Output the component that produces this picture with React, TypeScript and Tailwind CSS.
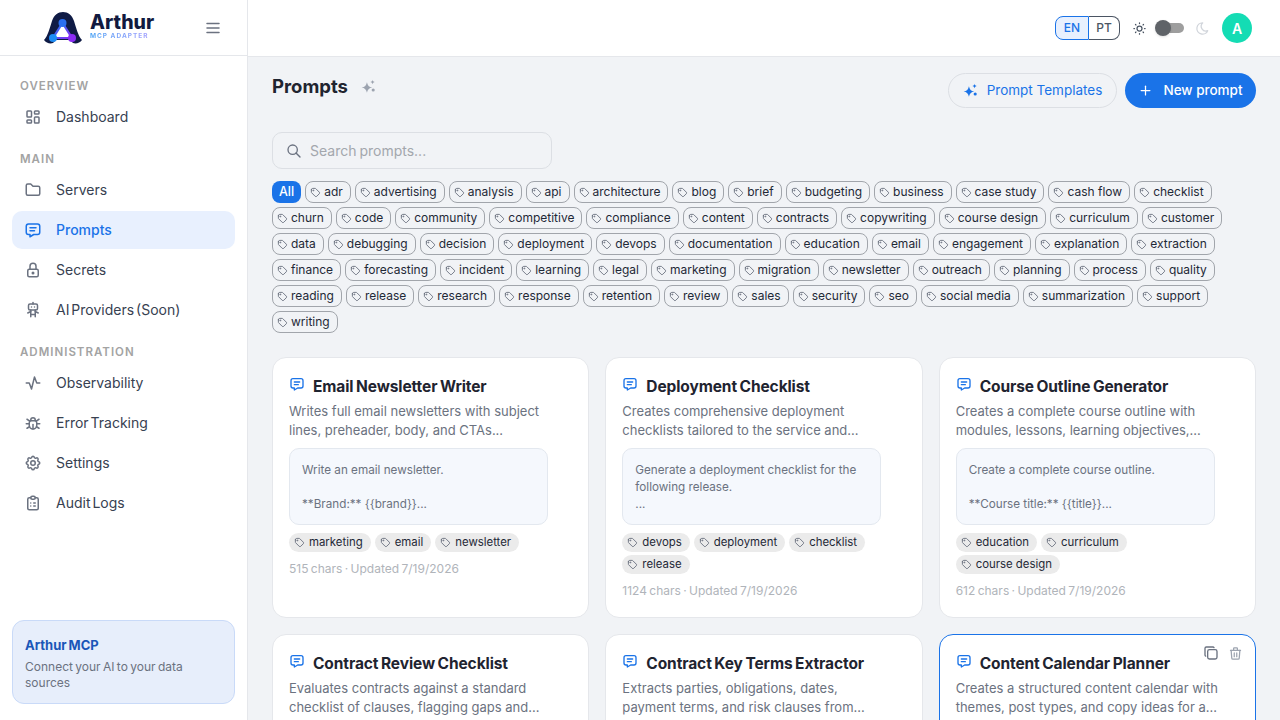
import { ReactNode } from 'react';
import {
  TbActivity,
  TbBug,
  TbClipboardList,
  TbCopy,
  TbFolder,
  TbLayoutDashboard,
  TbLock,
  TbMenu2,
  TbMessage,
  TbMoon,
  TbPlus,
  TbRobot,
  TbSearch,
  TbSettings,
  TbSun,
  TbTag,
  TbTrash,
} from 'react-icons/tb';

const FILTERS = [
  'adr', 'advertising', 'analysis', 'api', 'architecture', 'blog', 'brief', 'budgeting', 'business', 'case study', 'cash flow', 'checklist',
  'churn', 'code', 'community', 'competitive', 'compliance', 'content', 'contracts', 'copywriting', 'course design', 'curriculum', 'customer',
  'data', 'debugging', 'decision', 'deployment', 'devops', 'documentation', 'education', 'email', 'engagement', 'explanation', 'extraction',
  'finance', 'forecasting', 'incident', 'learning', 'legal', 'marketing', 'migration', 'newsletter', 'outreach', 'planning', 'process', 'quality',
  'reading', 'release', 'research', 'response', 'retention', 'review', 'sales', 'security', 'seo', 'social media', 'summarization', 'support',
  'writing',
];

type Prompt = {
  title: string;
  description: string;
  preview?: string;
  tags?: string[];
  meta?: string;
  selected?: boolean;
};

const PROMPTS: Prompt[] = [
  {
    title: 'Email Newsletter Writer',
    description: 'Writes full email newsletters with subject lines, preheader, body, and CTAs...',
    preview: 'Write an email newsletter.\n\n**Brand:** {{brand}}...',
    tags: ['marketing', 'email', 'newsletter'],
    meta: '515 chars · Updated 7/19/2026',
  },
  {
    title: 'Deployment Checklist',
    description: 'Creates comprehensive deployment checklists tailored to the service and...',
    preview: 'Generate a deployment checklist for the following release.\n...',
    tags: ['devops', 'deployment', 'checklist', 'release'],
    meta: '1124 chars · Updated 7/19/2026',
  },
  {
    title: 'Course Outline Generator',
    description: 'Creates a complete course outline with modules, lessons, learning objectives,...',
    preview: 'Create a complete course outline.\n\n**Course title:** {{title}}...',
    tags: ['education', 'curriculum', 'course design'],
    meta: '612 chars · Updated 7/19/2026',
  },
  {
    title: 'Contract Review Checklist',
    description: 'Evaluates contracts against a standard checklist of clauses, flagging gaps and...',
  },
  {
    title: 'Contract Key Terms Extractor',
    description: 'Extracts parties, obligations, dates, payment terms, and risk clauses from...',
  },
  {
    title: 'Content Calendar Planner',
    description: 'Creates a structured content calendar with themes, post types, and copy ideas for a...',
    selected: true,
  },
];

function Sparkle({ className }: { className: string }) {
  return (
    <svg viewBox="0 0 24 24" fill="currentColor" className={className}>
      <path d="M9.500 5c.9 5.200 3.300 7.600 8.500 8.500-5.200.9-7.600 3.300-8.500 8.500-.9-5.200-3.300-7.600-8.500-8.500C6.200 12.600 8.600 10.200 9.500 5z" />
      <path d="M18.500 1c.4 2.300 1.400 3.300 3.700 3.700-2.300.4-3.300 1.400-3.700 3.700-.4-2.300-1.400-3.300-3.700-3.700C17.100 4.300 18.100 3.300 18.500 1z" />
      <circle cx="19.500" cy="17.500" r="2.500" />
    </svg>
  );
}

function Logo() {
  return (
    <div className="flex items-center gap-[8px]">
      <svg viewBox="0 0 38 32" className="w-[38px] h-[32px]">
        <defs>
          <linearGradient id="tri" x1="0" y1="0" x2="1" y2="1">
            <stop offset="0" stopColor="#1c7cf5" />
            <stop offset="1" stopColor="#8b2cf5" />
          </linearGradient>
        </defs>
        <path d="M0 28C4 24 6 15 8 9 10 3 14 0 19 0s9 3 11 9c2 6 4 15 8 19-2 3-6 4-9 3l-3-3H12l-3 3C6 32 2 31 0 28z" fill="#0f1b45" />
        <path d="M18.500 11 9 26h19z" fill="#fff" stroke="url(#tri)" strokeWidth="2.200" />
        <circle cx="18.500" cy="11" r="4" fill="#2a6ff0" />
        <circle cx="9" cy="26" r="4" fill="#1c8cf5" />
        <circle cx="28" cy="26" r="4" fill="#8b2cf5" />
      </svg>
      <div className="flex flex-col -mt-[4px]">
        <span className="text-[19.500px] leading-[20px] font-extrabold text-[#111a3f]">Arthur</span>
        <span className="text-[6.500px] leading-[8px] font-bold tracking-[1px] bg-gradient-to-r from-[#4aa3f5] to-[#a8a0ff] bg-clip-text text-transparent">MCP ADAPTER</span>
      </div>
    </div>
  );
}

function NavLabel({ children }: { children: ReactNode }) {
  return <div className="h-[18px] leading-[18px] px-[8px] text-[11.500px] font-semibold tracking-[1px] text-[#a3a3a3] mb-[3px]">{children}</div>;
}

function NavItem({ icon, label, active }: { icon: ReactNode; label: string; active?: boolean }) {
  return (
    <div className={`h-[38px] flex items-center gap-[14px] pl-[12px] pb-[1px] rounded-[10px] text-[14px] [word-spacing:-2px] ${active ? 'bg-[#e8f0fe] text-[#1a73e8] font-medium' : 'text-[#374151]'}`}>
      <span className={`text-[18px] w-[18px] flex justify-center ${active ? 'text-[#1a73e8]' : 'text-[#6b7280]'}`}>{icon}</span>
      {label}
    </div>
  );
}

function FilterChip({ label }: { label: string }) {
  return (
    <span className="h-[22px] flex items-center gap-[3px] pl-[4px] pr-[7px] rounded-[8px] border border-[#a1a5ab] text-[12px] text-[#1f2937] whitespace-nowrap">
      <TbTag className="text-[11px] text-[#6b7280]" />
      {label}
    </span>
  );
}

function PromptCard({ prompt }: { prompt: Prompt }) {
  return (
    <div className={`relative bg-white rounded-[14px] border px-[16px] pt-[16px] pb-[17px] ${prompt.selected ? 'border-[#1a73e8]' : 'border-[#e5e7eb]'}`}>
      {prompt.selected && (
        <div className="absolute top-[10px] right-[12px] flex items-center gap-[9px] text-[#6b7280]">
          <TbCopy className="text-[16px]" />
          <TbTrash className="text-[15px] text-[#9ca3af]" />
        </div>
      )}
      <div className="flex gap-[8px] h-[24px]">
        <TbMessage className="text-[16px] text-[#1a73e8] mt-[2px] shrink-0" />
        <span className="text-[15.500px] leading-[26px] font-bold tracking-[-0.1px] text-[#1f2430] whitespace-nowrap [word-spacing:-1px]">{prompt.title}</span>
      </div>
      <p className="mt-[4px] w-[268px] text-[13px] leading-[19px] text-[#6b7280] h-[38px]">{prompt.description}</p>
      {prompt.preview && (
        <div className="mt-[8px] w-[259px] h-[77px] bg-[#f5f8fd] border border-[#e3e8ef] rounded-[10px] px-[12px] pt-[13px] text-[11.700px] leading-[17px] text-[#6b7280] whitespace-pre-line">
          {prompt.preview}
        </div>
      )}
      {prompt.tags && (
        <div className="mt-[8px] w-[262px] flex flex-wrap gap-x-[4px] gap-y-[3px]">
          {prompt.tags.map(t => (
            <span key={t} className="h-[19px] flex items-center gap-[4px] pl-[5px] pr-[8px] rounded-full bg-[#ebebeb] text-[11.400px] text-[#1f2937]">
              <TbTag className="text-[11px] text-[#6b7280]" />
              {t}
            </span>
          ))}
        </div>
      )}
      {prompt.meta && <div className="mt-[8px] h-[18px] leading-[18px] text-[12px] text-[#b0b4ba] [word-spacing:-1px]">{prompt.meta}</div>}
    </div>
  );
}

export default function App() {
  return (
    <div className="h-screen flex overflow-hidden bg-[#f1f3f6] font-['Inter',sans-serif]">
      <aside className="w-[248px] shrink-0 h-full bg-white border-r border-[#e5e7eb] flex flex-col">
        <div className="h-[56px] shrink-0 border-b border-[#e5e7eb] flex items-center justify-between pl-[44px] pr-[25px]">
          <Logo />
          <TbMenu2 className="text-[18px] text-[#6b7280]" />
        </div>
        <nav className="flex-1 px-[12px] pt-[21px]">
          <NavLabel>OVERVIEW</NavLabel>
          <NavItem icon={<TbLayoutDashboard />} label="Dashboard" />
          <div className="mt-[14px]">
            <NavLabel>MAIN</NavLabel>
            <div className="flex flex-col gap-[2px]">
              <NavItem icon={<TbFolder />} label="Servers" />
              <NavItem icon={<TbMessage />} label="Prompts" active />
              <NavItem icon={<TbLock />} label="Secrets" />
              <NavItem icon={<TbRobot />} label="AI Providers (Soon)" />
            </div>
          </div>
          <div className="mt-[14px]">
            <NavLabel>ADMINISTRATION</NavLabel>
            <div className="flex flex-col gap-[2px]">
              <NavItem icon={<TbActivity />} label="Observability" />
              <NavItem icon={<TbBug />} label="Error Tracking" />
              <NavItem icon={<TbSettings />} label="Settings" />
              <NavItem icon={<TbClipboardList />} label="Audit Logs" />
            </div>
          </div>
        </nav>
        <div className="mx-[12px] mb-[16px] h-[84px] rounded-[12px] bg-[#e7eefb] border border-[#c9daf8] px-[12px] pt-[14px]">
          <div className="text-[13px] leading-[20px] font-bold text-[#1a56b8] [word-spacing:-1px]">Arthur MCP</div>
          <div className="mt-[4px] text-[12px] leading-[16px] text-[#6b7280] [word-spacing:-1px]">Connect your AI to your data sources</div>
        </div>
      </aside>

      <div className="flex-1 min-w-0 flex flex-col">
        <header className="h-[57px] shrink-0 bg-white border-b border-[#e5e7eb] flex items-center justify-end pr-[28px]">
          <div className="flex h-[24px] text-[12px] font-medium">
            <span className="w-[34px] flex items-center justify-center rounded-l-[8px] border border-[#1a73e8] bg-[#e8f0fe] text-[#1a73e8]">EN</span>
            <span className="w-[31px] flex items-center justify-center rounded-r-[8px] border border-l-0 border-[#4b5563] text-[#4b5563]">PT</span>
          </div>
          <TbSun className="ml-[12px] text-[15px] text-[#4b5563]" />
          <div className="ml-[9px] relative w-[28px] h-[10px] rounded-full bg-[#9e9e9e]">
            <span className="absolute -left-[1px] -top-[3px] w-[16px] h-[16px] rounded-full bg-[#5f6368] shadow" />
          </div>
          <TbMoon className="ml-[11px] text-[15px] text-[#d1d5db]" />
          <div className="ml-[12px] w-[30px] h-[30px] rounded-full bg-[#14dcb4] flex items-center justify-center text-white text-[14px] font-semibold">A</div>
        </header>

        <main className="flex-1 min-h-0 overflow-hidden pl-[24px] pr-[24px] pt-[16px]">
          <div className="flex items-center justify-between h-[35px]">
            <div className="flex items-center gap-[13px] -mt-[8px]">
              <h1 className="text-[18.500px] font-bold text-[#1f2430]">Prompts</h1>
              <Sparkle className="w-[15px] h-[15px] text-[#9ca3af]" />
            </div>
            <div className="flex items-center gap-[8px]">
              <button className="h-[35px] w-[169px] flex items-center justify-center gap-[9px] rounded-full border border-[#dcdfe4] text-[13.500px] text-[#1a73e8]">
                <Sparkle className="w-[15px] h-[15px]" />
                Prompt Templates
              </button>
              <button className="h-[35px] w-[131px] flex items-center justify-center gap-[10px] rounded-full bg-[#1a73e8] text-[13.500px] font-medium text-white">
                <TbPlus className="text-[15px]" />
                New prompt
              </button>
            </div>
          </div>

          <div className="mt-[24px] w-[280px] h-[37px] flex items-center gap-[8px] px-[13px] rounded-[10px] border border-[#dcdfe4]">
            <TbSearch className="text-[16px] text-[#6b7280]" />
            <span className="text-[14px] text-[#a3a7ad] [word-spacing:-1px]">Search prompts...</span>
          </div>

          <div className="mt-[12px] flex flex-wrap gap-x-[4px] gap-y-[4px]">
            <span className="h-[22px] px-[7px] flex items-center rounded-[8px] bg-[#1a73e8] text-white text-[12.500px] font-medium">All</span>
            {FILTERS.map(f => <FilterChip key={f} label={f} />)}
          </div>

          <div className="mt-[24px] grid grid-cols-3 gap-x-[16px] gap-y-[16px]">
            {PROMPTS.map(p => <PromptCard key={p.title} prompt={p} />)}
          </div>
        </main>
      </div>
    </div>
  );
}
